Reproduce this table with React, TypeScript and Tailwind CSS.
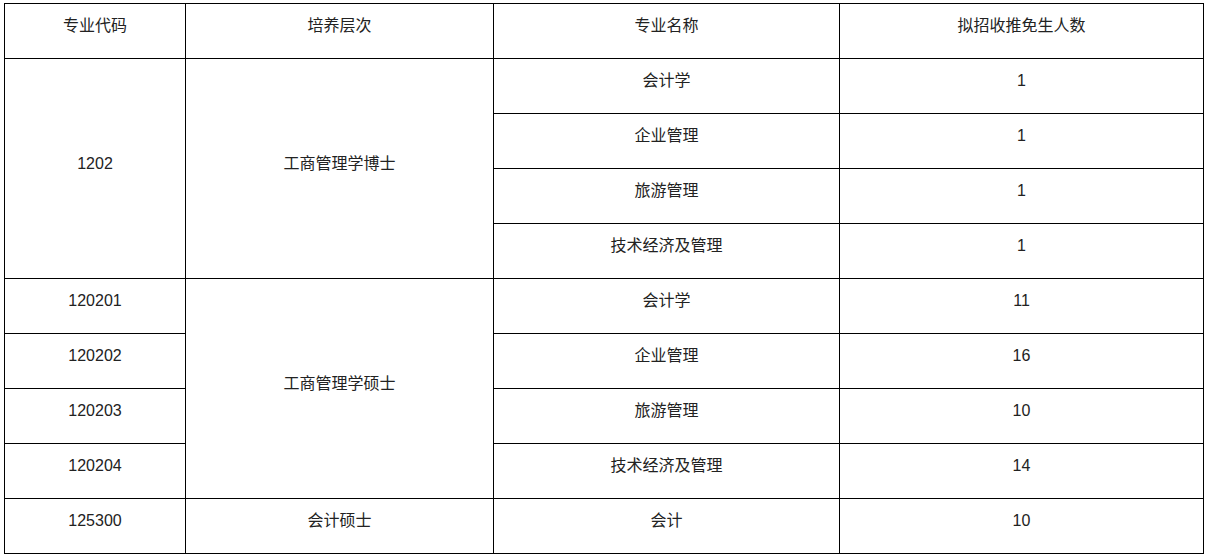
import React from "react";

const cell =
  "border border-[#000] text-center align-middle pb-[10px] px-2 font-normal";

const rows: { code: string; name: string; num: string }[] = [
  { code: "120201", name: "会计学", num: "11" },
  { code: "120202", name: "企业管理", num: "16" },
  { code: "120203", name: "旅游管理", num: "10" },
  { code: "120204", name: "技术经济及管理", num: "14" },
];

const phd = [
  { name: "会计学", num: "1" },
  { name: "企业管理", num: "1" },
  { name: "旅游管理", num: "1" },
  { name: "技术经济及管理", num: "1" },
];

export default function App() {
  return (
    <div className="bg-white w-[1208px] h-[558px] pt-[3px] pl-[4px] font-['Liberation_Sans','Noto_Sans_CJK_SC',sans-serif] text-[16px] text-[#222]">
      <table className="border-collapse table-fixed w-[1199px]">
        <colgroup>
          <col className="w-[181px]" />
          <col className="w-[308px]" />
          <col className="w-[346px]" />
          <col className="w-[364px]" />
        </colgroup>
        <thead>
          <tr className="h-[55px]">
            <th className={cell}>专业代码</th>
            <th className={cell}>培养层次</th>
            <th className={cell}>专业名称</th>
            <th className={cell}>拟招收推免生人数</th>
          </tr>
        </thead>
        <tbody>
          {phd.map((r, i) => (
            <tr key={r.name} className="h-[55px]">
              {i === 0 && (
                <>
                  <td rowSpan={4} className={cell}>
                    1202
                  </td>
                  <td rowSpan={4} className={cell}>
                    工商管理学博士
                  </td>
                </>
              )}
              <td className={cell}>{r.name}</td>
              <td className={cell}>{r.num}</td>
            </tr>
          ))}
          {rows.map((r, i) => (
            <tr key={r.code} className="h-[55px]">
              <td className={cell}>{r.code}</td>
              {i === 0 && (
                <td rowSpan={4} className={cell}>
                  工商管理学硕士
                </td>
              )}
              <td className={cell}>{r.name}</td>
              <td className={cell}>{r.num}</td>
            </tr>
          ))}
          <tr className="h-[55px]">
            <td className={cell}>125300</td>
            <td className={cell}>会计硕士</td>
            <td className={cell}>会计</td>
            <td className={cell}>10</td>
          </tr>
        </tbody>
      </table>
    </div>
  );
}
